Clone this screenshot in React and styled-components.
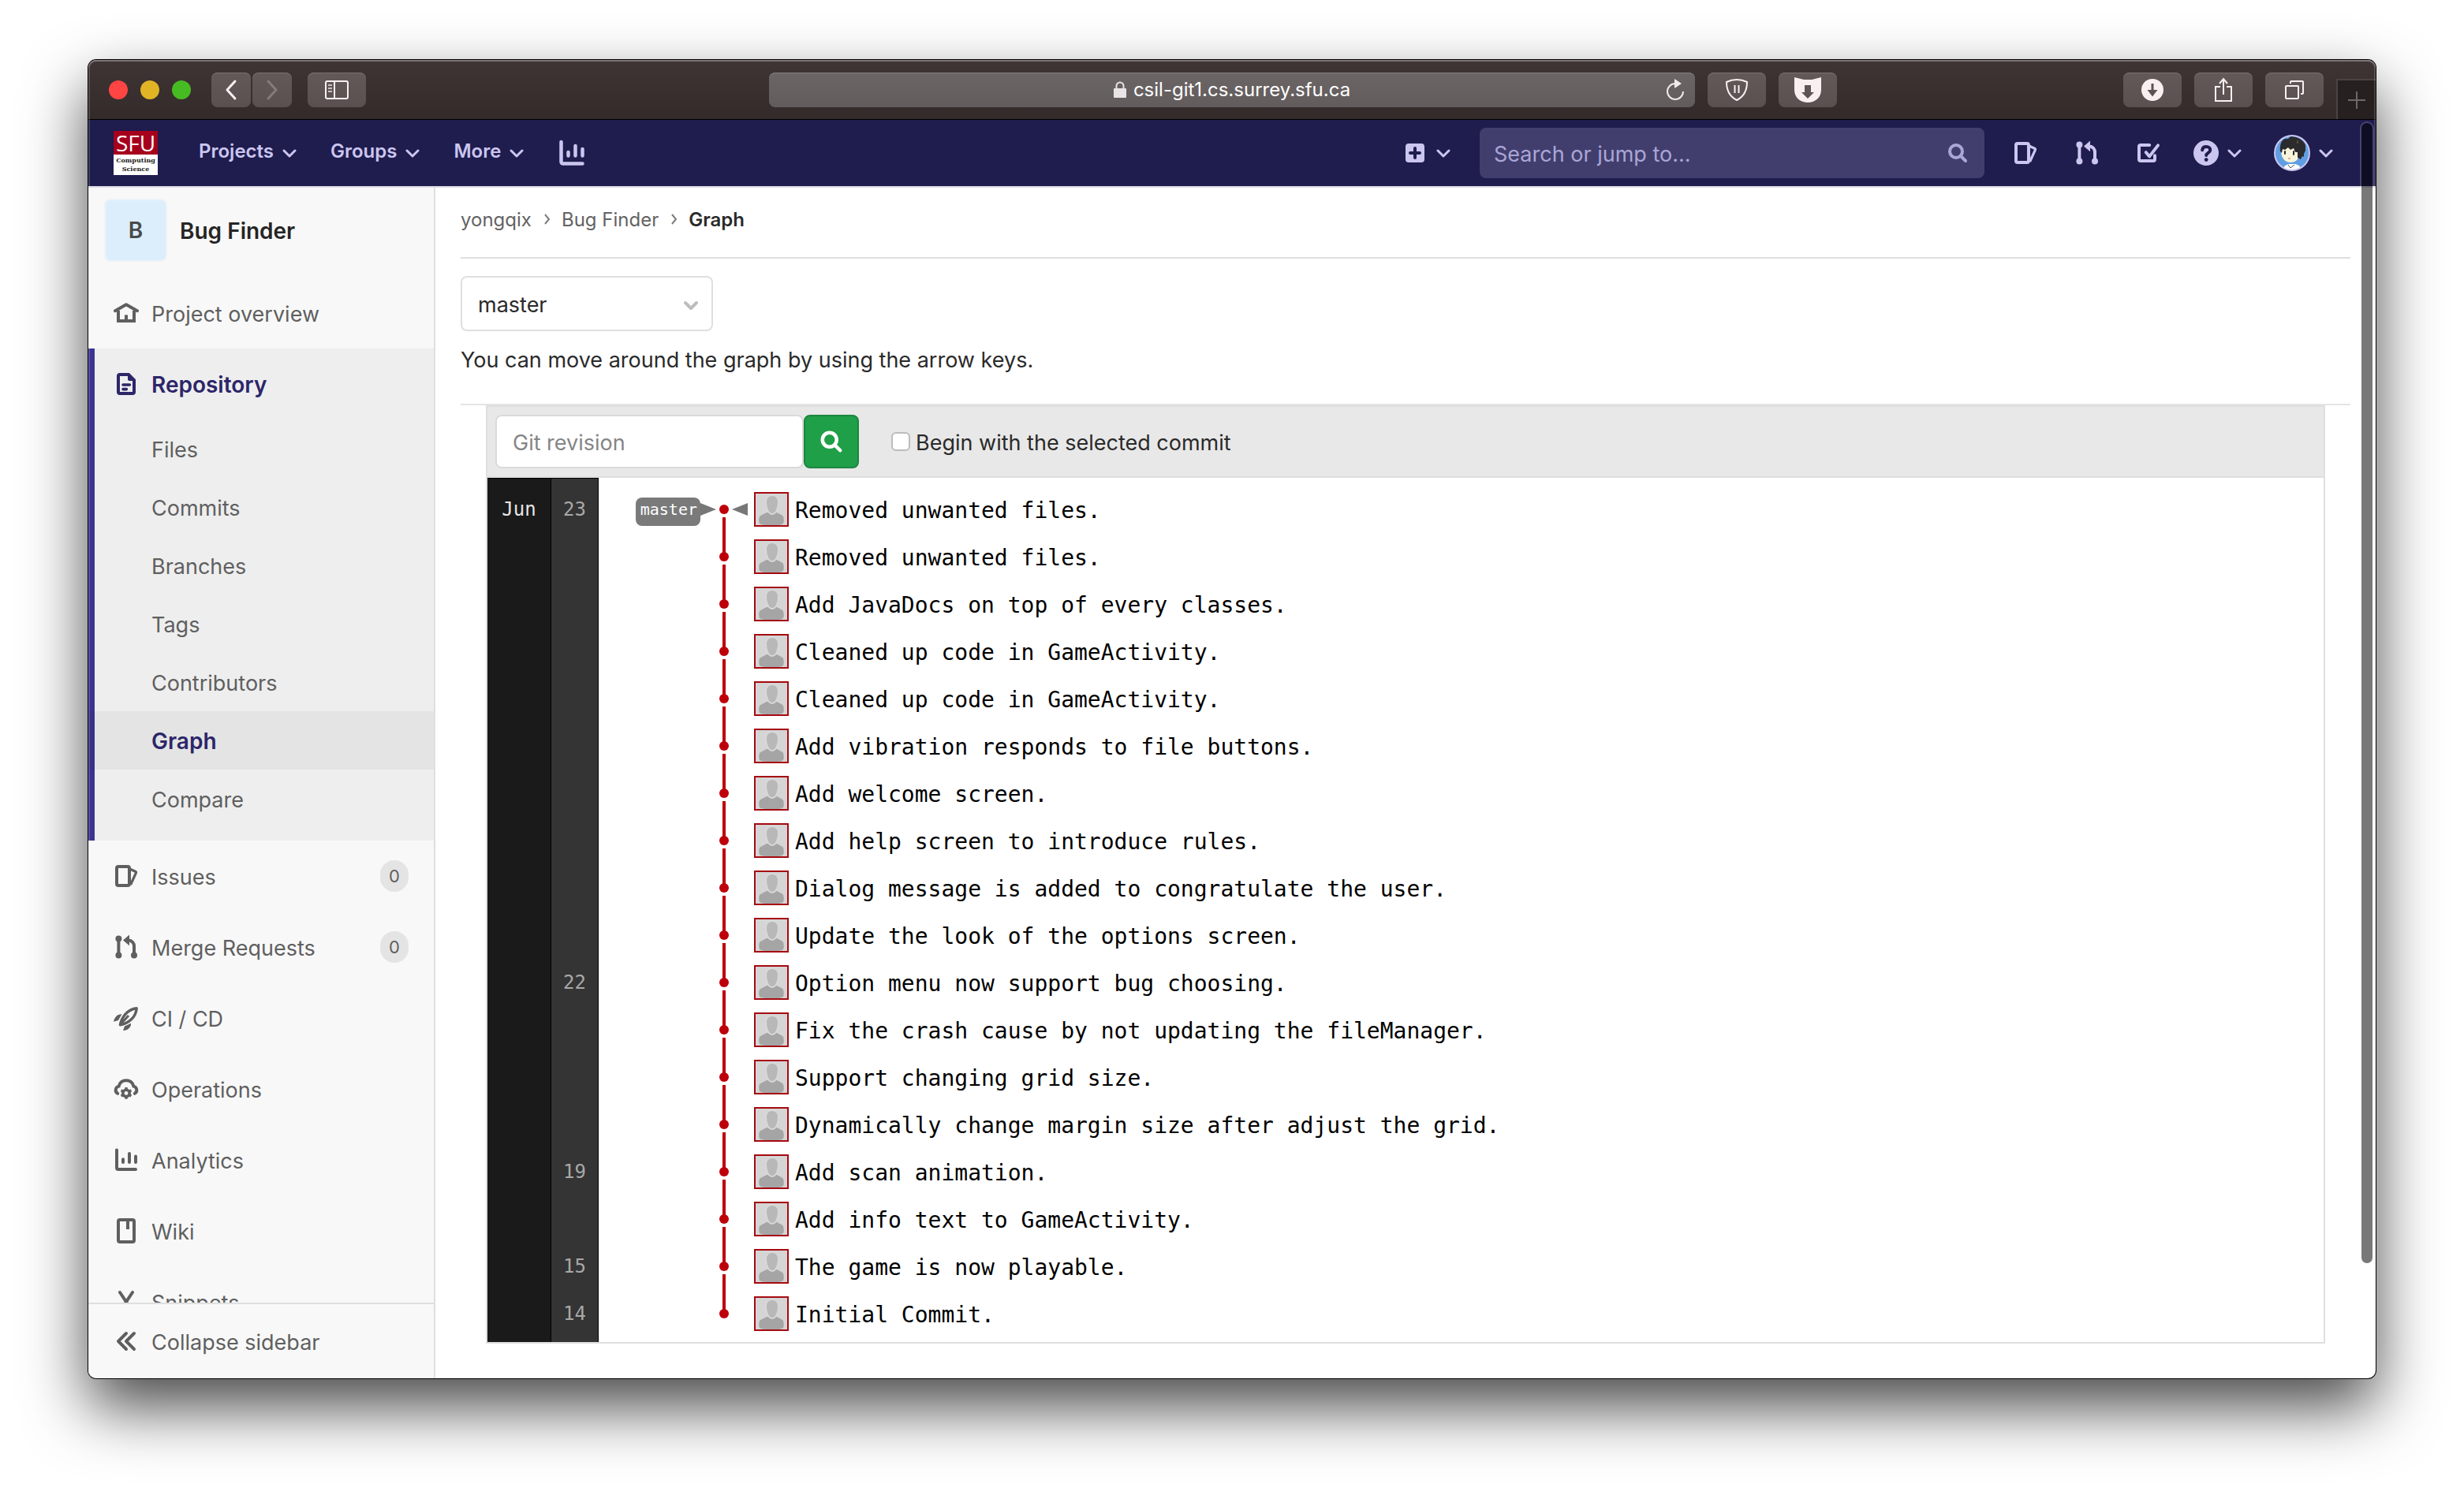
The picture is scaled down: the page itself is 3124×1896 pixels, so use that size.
import React from "react";
import styled, { createGlobalStyle, css } from "styled-components";

const Global = createGlobalStyle`
  * { box-sizing: border-box; }
  body {
    margin: 0;
    background: #fff;
    font-family: Inter, "Liberation Sans", sans-serif;
    font-size: 27px;
    color: #2a2a2a;
  }
  button, input, select { font: inherit; color: inherit; margin: 0; }
  button { padding: 0; border: 0; background: none; }
  a { color: inherit; text-decoration: none; }
  svg { display: block; flex: none; }
`;

/* ---------- window frame ---------- */

const Desktop = styled.div`
  min-height: 100vh;
  padding: 76px 112px 148px;
`;

const Window = styled.div`
  position: relative;
  display: flex;
  flex-direction: column;
  height: calc(100vh - 224px);
  overflow: hidden;
  border-radius: 10px;
  background: #fff;
  box-shadow: 0 0 0 1px #000, 0 36px 80px rgba(0, 0, 0, 0.72);

  &::after {
    content: "";
    position: absolute;
    inset: 0;
    border-radius: 10px;
    box-shadow: inset 0 2px 0 rgba(255, 255, 255, 0.2), inset 0 0 0 2px rgba(255, 255, 255, 0.16);
    pointer-events: none;
  }
`;

const Chrome = styled.header`
  flex: none;
  display: grid;
  grid-template-columns: minmax(0, 1fr) minmax(0, 1174px) minmax(0, 1fr);
  height: 76px;
  border-bottom: 1px solid #000;
  background: linear-gradient(#403535, #332a2a);
`;

const ChromeSide = styled.div`
  display: flex;
  align-items: center;
  gap: ${(p) => p.$gap}px;
  padding-left: ${(p) => p.$start}px;
`;

const Lights = styled.div`
  display: flex;
  gap: 16px;
  padding-right: 6px;
`;

const Light = styled.span`
  width: 24px;
  height: 24px;
  border-radius: 50%;
  background: ${(p) => p.$color};
`;

const Pair = styled.div`
  display: flex;
  gap: 2px;
`;

const ChromeButton = styled.button`
  display: flex;
  align-items: center;
  justify-content: center;
  width: ${(p) => (p.$narrow ? 50 : 74)}px;
  height: 44px;
  border-radius: 8px;
  color: ${(p) => (p.$dim ? "#857b7b" : "#f8f0f0")};
  background: linear-gradient(#645959, #5a5050);
  box-shadow: inset 0 1px 0 #7a7070;
`;

const Spacer = styled.div`
  flex: 1;
`;

const Address = styled.div`
  display: grid;
  grid-template-columns: 36px 1fr 36px;
  align-items: center;
  align-self: center;
  height: 44px;
  border-radius: 8px;
  color: #fff;
  font-size: 24px;
  background: linear-gradient(#6b6565, #635c5c);
  box-shadow: inset 0 1px 0 #857f7f;
`;

const Url = styled.div`
  grid-column: 2;
  display: flex;
  align-items: center;
  justify-content: center;
  gap: 9px;
`;

const NewTab = styled.button`
  align-self: flex-end;
  display: flex;
  align-items: center;
  justify-content: center;
  width: 50px;
  height: 51px;
  border-left: 2px solid #4b4343;
  border-top: 2px solid #4b4343;
  background: #262020;
  color: #6f6868;
`;

const ScrollThumb = styled.div`
  position: absolute;
  top: 80px;
  right: 4px;
  width: 14px;
  height: calc(100% - 226px);
  border-radius: 7px;
  background: rgba(0, 0, 0, 0.53);
  box-shadow: 0 0 0 2px rgba(255, 255, 255, 0.18);
`;

/* ---------- site navigation ---------- */

const Navbar = styled.nav`
  flex: none;
  display: flex;
  align-items: center;
  height: 86px;
  padding: 0 54px 0 32px;
  border-bottom: 2px solid #dcdbe4;
  background: #1f1c4e;
  color: #cbc6f0;
`;

const Logo = styled.a`
  display: flex;
  flex-direction: column;
  width: 56px;
  height: 56px;
  margin-right: 52px;
  text-align: center;
  background: #fff;
`;

const LogoTop = styled.span`
  height: 30px;
  font: 28px/30px "Open Sans", sans-serif;
  color: #fff;
  background: #a6001c;
`;

const LogoBottom = styled.span`
  padding-top: 2px;
  font: bold 8px/11px "DejaVu Serif", serif;
  color: #222;
`;

const NavGroup = styled.div`
  display: flex;
  align-items: center;
  gap: ${(p) => p.$gap}px;
`;

const NavLink = styled.button`
  display: flex;
  align-items: center;
  gap: 11px;
  font-size: 24px;
  font-weight: 600;
`;

const NavText = styled.span`
  padding-bottom: 5px;
`;

const SearchBox = styled.label`
  display: flex;
  align-items: center;
  width: 640px;
  height: 64px;
  margin: 0 36px 0 37px;
  padding: 0 18px;
  border-radius: 8px;
  color: #aaa6d6;
  background: #413e6e;
`;

const SearchInput = styled.input`
  flex: 1;
  min-width: 0;
  padding: 2px 0 0;
  border: 0;
  outline: 0;
  background: none;
  &::placeholder { color: #aaa6d6; opacity: 1; }
`;

/* ---------- sidebar ---------- */

const Body = styled.div`
  flex: 1;
  display: flex;
  min-height: 0;
`;

const Sidebar = styled.aside`
  flex: none;
  display: flex;
  flex-direction: column;
  width: 440px;
  border-right: 2px solid #dfdfdf;
  background: #f8f8f8;
  color: #5f5f5f;
`;

const SidebarScroll = styled.div`
  flex: 1;
  min-height: 0;
  overflow: hidden;
`;

const Project = styled.a`
  display: flex;
  align-items: center;
  gap: 16px;
  padding: 14px 20px 20px;
  font-weight: 600;
  font-size: 28px;
  color: #252525;
`;

const ProjectLetter = styled.span`
  display: flex;
  align-items: center;
  justify-content: center;
  width: 80px;
  height: 80px;
  border: 2px solid #eef3f7;
  border-radius: 8px;
  color: #4a4a4a;
  background: #dceefc;
`;

const Section = styled.div`
  padding-bottom: 16px;
  background: #eeeeee;
  box-shadow: inset 8px 0 0 #3b3391;
`;

const Item = styled.a`
  display: flex;
  align-items: center;
  gap: 16px;
  height: 90px;
  padding: 0 32px;
  ${(p) =>
    p.$active &&
    css`
      font-size: 28px;
      font-weight: 600;
      color: #2c2669;
    `}
`;

const ItemText = styled.span`
  padding-top: 2px;
`;

const SubItem = styled.a`
  display: flex;
  align-items: center;
  height: 74px;
  padding: 2px 0 0 80px;
  ${(p) =>
    p.$active &&
    css`
      font-size: 28px;
      font-weight: 600;
      color: #2c2669;
      background: #e4e4e4;
      box-shadow: inset 8px 0 0 #383089;
    `}
`;

const Count = styled.span`
  margin-left: auto;
  width: 36px;
  border-radius: 20px;
  font-size: 22px;
  line-height: 40px;
  text-align: center;
  background: #e4e4e4;
`;

const Collapse = styled.button`
  flex: none;
  display: flex;
  align-items: center;
  gap: 16px;
  height: 96px;
  padding: 0 32px;
  border-top: 2px solid #dfdfdf;
`;

/* ---------- page ---------- */

const Main = styled.main`
  flex: 1;
  min-width: 0;
  padding: 0 32px;
`;

const Crumbs = styled.nav`
  display: flex;
  align-items: center;
  gap: 13px;
  height: 90px;
  padding-bottom: 8px;
  border-bottom: 2px solid #dfdfdf;
  font-size: 24px;
  color: #636363;
`;

const Current = styled.span`
  font-weight: 600;
  color: #2a2a2a;
`;

const BranchPicker = styled.div`
  position: relative;
  width: 320px;
  margin-top: 22px;
  svg {
    position: absolute;
    top: 28px;
    right: 19px;
    color: #bdbdbd;
    pointer-events: none;
  }
`;

const BranchSelect = styled.select`
  appearance: none;
  display: block;
  width: 100%;
  height: 70px;
  padding: 2px 20px 0;
  border: 2px solid #dfdfdf;
  border-radius: 8px;
  background: #fff;
`;

const Hint = styled.p`
  margin: 0;
  padding: 19px 0 37px;
  line-height: 36px;
  border-bottom: 2px solid #e4e4e4;
`;

const Network = styled.section`
  margin: 0 32px;
  border: 2px solid #dfdfdf;
`;

const Toolbar = styled.form`
  display: flex;
  align-items: center;
  height: 90px;
  padding: 0 10px;
  border-bottom: 2px solid #dfdfdf;
  background: #e8e8e8;
`;

const RevisionInput = styled.input`
  width: 391px;
  height: 68px;
  padding: 2px 20px 0;
  border: 2px solid #dadada;
  border-radius: 8px;
  background: #fff;
  &::placeholder { color: #858585; opacity: 1; }
`;

const GoButton = styled.button`
  display: flex;
  align-items: center;
  justify-content: center;
  width: 70px;
  height: 68px;
  border: 2px solid #1d8640;
  border-radius: 8px;
  color: #fff;
  background: #1f9f47;
`;

const Check = styled.input`
  appearance: none;
  width: 24px;
  height: 24px;
  margin: 0 7px 0 41px;
  border: 2px solid #bcbcbc;
  border-radius: 6px;
  background: #fff;
`;

const CheckLabel = styled.label`
  padding-top: 2px;
`;

const Graph = styled.div`
  display: flex;
  font-family: "DejaVu Sans Mono", monospace;
`;

const DateColumn = styled.div`
  flex: none;
  width: ${(p) => p.$width}px;
  padding: 9px 0 6px;
  border: 1px solid #000;
  border-width: 1px 1px 0 0;
  font-size: 24px;
  text-align: center;
  color: ${(p) => p.$color};
  background: ${(p) => p.$bg};
`;

const DateCell = styled.div`
  height: 60px;
  line-height: 61px;
`;

const Commits = styled.ol`
  flex: 1;
  min-width: 0;
  margin: 0;
  padding: 10px 0 6px;
  list-style: none;
  font-size: 28px;
  color: #000;
`;

const Commit = styled.li`
  display: flex;
  align-items: center;
  height: 60px;
`;

const RefCell = styled.div`
  display: flex;
  justify-content: flex-end;
  align-items: center;
  width: 149px;
`;

const RefTag = styled.span`
  height: 36px;
  margin-top: 6px;
  padding: 0 4px 0 6px;
  border-radius: 8px;
  font-size: 20px;
  line-height: 30px;
  color: #fff;
  background: #7a7a7a;
`;

const PointerCell = styled.div`
  width: 28px;
`;

const Avatar = styled.span`
  margin-right: 8px;
  border: 2px solid #a60a10;
`;

const CommitText = styled.span`
  padding-top: 2px;
`;

/* ---------- drawings ---------- */

const Icon = ({ size = 32, children, stroke = 2 }) => (
  <svg width={size} height={size} viewBox="0 0 16 16" fill="none" stroke="currentColor" strokeWidth={stroke} aria-hidden="true">
    {children}
  </svg>
);

const Chevron = ({ heavy }) => (
  <svg width="18" height="18" viewBox="0 0 18 18" fill="none" stroke="currentColor" strokeWidth={heavy ? 4 : 3} strokeLinecap="round" strokeLinejoin="round">
    <path d="M2 6l7 7 7-7" />
  </svg>
);

const CrumbArrow = () => (
  <svg width="12" height="14" viewBox="0 0 12 14" fill="none" stroke="#7d7d7d" strokeWidth="2">
    <path d="M4 1l5 6-5 6" />
  </svg>
);

const SearchIcon = ({ size = 32, stroke = 2 }) => (
  <Icon size={size} stroke={stroke}>
    <circle cx="7" cy="7" r="4" />
    <path d="M10 10l3 3" strokeLinecap="round" />
  </Icon>
);

const IssuesIcon = () => (
  <Icon>
    <rect x="2" y="2" width="8" height="12" rx="1" />
    <path d="M10.5 3.6l3.3 1.5a.8.8 0 0 1 .4 1l-3.4 7.4" strokeWidth="1.6" strokeLinejoin="round" />
  </Icon>
);

const MergeIcon = () => (
  <Icon>
    <path d="M3.2 3v10M13 13V7.5a3.5 3.5 0 0 0-3.5-3.7" />
    <g fill="currentColor" stroke="none">
      <circle cx="3.2" cy="2.8" r="2" />
      <circle cx="3.2" cy="13.2" r="2" />
      <circle cx="13" cy="13.2" r="2" />
      <path d="M6 3.7L10 .3v6.8z" />
    </g>
  </Icon>
);

const TodoIcon = () => (
  <Icon>
    <path d="M8.6 3H3a1 1 0 0 0-1 1v8a1 1 0 0 0 1 1h8a1 1 0 0 0 1-1V9.6" strokeLinecap="round" />
    <path d="M6.4 7.6l2.2 2.6L14 3.2" strokeLinecap="round" strokeLinejoin="round" />
  </Icon>
);

const ChartIcon = ({ size }) => (
  <Icon size={size}>
    <path d="M2 1.8V13a1 1 0 0 0 1 1h11" strokeLinecap="round" />
    <path d="M6 7.6v1.9M10 4v5.5M14 5.8v3.7" strokeLinecap="round" />
  </Icon>
);

const PlusIcon = () => (
  <Icon>
    <rect x="2" y="2" width="12" height="12" rx="2" fill="currentColor" stroke="none" />
    <path d="M8 5v6M5 8h6" stroke="#1f1c4e" strokeLinecap="round" />
  </Icon>
);

const HelpIcon = () => (
  <Icon>
    <circle cx="8" cy="8" r="8" fill="currentColor" stroke="none" />
    <path d="M5.6 6.1C5.8 4.7 6.8 4 8.1 4c1.4 0 2.5.8 2.5 2.2 0 1.7-2.5 1.7-2.5 3.3" stroke="#1f1c4e" strokeLinecap="round" />
    <circle cx="8.1" cy="12.3" r="1.2" fill="#1f1c4e" stroke="none" />
  </Icon>
);

const UserPicture = () => (
  <svg width="46" height="46" viewBox="0 0 46 46">
    <clipPath id="face-clip"><circle cx="23" cy="23" r="21" /></clipPath>
    <circle cx="23" cy="23" r="22" fill="#5f9fe4" stroke="#cbc6f0" strokeWidth="2" />
    <g clipPath="url(#face-clip)">
      <path d="M11 46c0-5 3-8 8-9h8c5 1 8 4 8 9z" fill="#fff" />
      <path d="M18 38l3 4 5-4" fill="none" stroke="#555" strokeWidth="1" />
      <path d="M9 20c0-7 5-8 12-8 8 0 11 4 11 11 0 8-4 12-11 12S9 29 9 20z" fill="#f8f4dc" />
      <path d="M8 21C7 14 9 7 14 5l4 0 3-3c9 0 16 4 19 11l0 7-2 4 0 4-2-1-2 4-4-2 0-7-3 0-2-5-4 2-3-3-4 3-3-1-1 5z" fill="#2b2b2d" />
      <path d="M14 21v3M25 21v4" stroke="#2b2b2d" strokeWidth="2" strokeLinecap="round" />
      <path d="M18 30h3" stroke="#c46a5a" strokeWidth="1" />
      <path d="M30 7v4" stroke="#8a6a40" strokeWidth="1" />
    </g>
  </svg>
);

const HomeIcon = () => (
  <Icon>
    <path d="M1 6.6l7-4 7 4" strokeLinecap="round" strokeLinejoin="round" />
    <path d="M3 6.5V13h10V6.5" />
    <path d="M8 9.2V13" />
  </Icon>
);

const FileIcon = () => (
  <Icon>
    <path d="M3 3a1 1 0 0 1 1-1h5.5L13 5.500V13a1 1 0 0 1-1 1H4a1 1 0 0 1-1-1z" />
    <path d="M9 1.5L13.5 6H10a1 1 0 0 1-1-1z" fill="currentColor" stroke="none" />
    <path d="M6 8.5h4.2M6 11.3h2.2" strokeWidth="1.8" strokeLinecap="round" />
  </Icon>
);

const RocketIcon = () => (
  <Icon>
    <path d="M4.2 12.4C5 8 8.5 2.500 14.6 1.9 14.200 7.5 9.5 11.5 4.2 12.4z" strokeWidth="1.7" strokeLinejoin="round" />
    <path d="M4.5 11.8l5-5.3" strokeWidth="1.5" />
    <path d="M0 10.4C.5 7.5 2.5 5.4 5.2 5.6L3 9.5z" fill="currentColor" stroke="none" />
    <path d="M6 16c3 0 5.2-2 5-4.6L7 13.2z" fill="currentColor" stroke="none" />
  </Icon>
);

const CloudGearIcon = () => (
  <Icon>
    <path d="M2.6 10.9A2.5 2.5 0 0 1 3.3 6.3C3.8 4 5.7 2.6 8 2.6s4.2 1.4 4.700 3.7a2.5 2.5 0 0 1 .7 4.6" strokeLinecap="round" />
    <circle cx="8" cy="10.7" r="2.1" strokeWidth="1.8" />
    <path d="M8 7v1.4M8 13v1.4M4.800 8.9l1.2.7M10 11.8l1.2.7M11.2 8.9l-1.2.7M6 11.8l-1.2.7" strokeWidth="1.7" />
  </Icon>
);

const BookIcon = () => (
  <Icon>
    <rect x="3" y="1" width="10" height="14" rx="1" />
    <path d="M9 1v6" />
  </Icon>
);

const ScissorsIcon = () => (
  <Icon>
    <path d="M4 2l6 9M12 2l-6 9" strokeLinecap="round" />
    <circle cx="4.5" cy="12.5" r="1.6" />
    <circle cx="11.5" cy="12.5" r="1.6" />
  </Icon>
);

const CollapseIcon = () => (
  <Icon>
    <path d="M8 3L3 8l5 5M13 3L8 8l5 5" strokeLinecap="round" strokeLinejoin="round" />
  </Icon>
);

const ArrowIcon = ({ d }) => (
  <svg width="16" height="34" viewBox="0 0 16 34" fill="none" stroke="currentColor" strokeWidth="3" strokeLinecap="round" strokeLinejoin="round">
    <path d={d} />
  </svg>
);

const PanelIcon = () => (
  <svg width="32" height="26" viewBox="0 0 32 26" fill="none" stroke="currentColor" strokeWidth="2">
    <rect x="2" y="2" width="28" height="22" rx="2" />
    <path d="M13 2v22" />
    <path d="M5 7h5M5 11h5M5 15h5" strokeOpacity=".7" />
  </svg>
);

const LockIcon = () => (
  <svg width="16" height="22" viewBox="0 0 16 22">
    <rect x="0" y="9" width="16" height="12" rx="1" fill="#e9e5e5" />
    <path d="M3.5 10V6a4.5 4.5 0 0 1 9 0v4" fill="none" stroke="#e9e5e5" strokeWidth="2" />
  </svg>
);

const ReloadIcon = () => (
  <svg width="24" height="28" viewBox="0 0 24 28">
    <path d="M21 16a10 10 0 1 1-10-10" fill="none" stroke="#efeaea" strokeWidth="2" />
    <path d="M10 0v12l9-6z" fill="#efeaea" />
  </svg>
);

const ShieldIcon = () => (
  <svg width="30" height="30" viewBox="0 0 30 30" fill="none" stroke="currentColor" strokeWidth="2">
    <path d="M15 2c4.5 0 9 1 13 3 0 10-3 18-13 23C5 23 2 15 2 5c4-2 8.5-3 13-3z" strokeLinejoin="round" />
    <path d="M12.5 9v10M17.5 9v10" />
  </svg>
);

const MaskIcon = () => (
  <svg width="36" height="34" viewBox="0 0 36 34" fill="currentColor">
    <path fillRule="evenodd" d="M1 1l12 3h10l12-3v16c0 10-8 16-17 16S1 27 1 17zM14 11v9h-4l8 8 8-8h-4v-9z" />
  </svg>
);

const DownloadIcon = () => (
  <svg width="28" height="28" viewBox="0 0 28 28">
    <circle cx="14" cy="14" r="14" fill="currentColor" />
    <path d="M12.5 6h3v8h5L14 22.5 7.5 14h5z" fill="#5c5252" />
  </svg>
);

const ShareIcon = () => (
  <svg width="24" height="32" viewBox="0 0 24 32" fill="none" stroke="currentColor" strokeWidth="2">
    <path d="M8 12H2v18h20V12h-6M12 22V3M7 8l5-6 5 6" />
  </svg>
);

const TabsIcon = () => (
  <svg width="26" height="26" viewBox="0 0 26 26" fill="none" stroke="currentColor" strokeWidth="2">
    <rect x="2" y="8" width="16" height="16" rx="1" />
    <path d="M8 5V3a1 1 0 0 1 1-1h14a1 1 0 0 1 1 1v14a1 1 0 0 1-1 1h-2" />
  </svg>
);

const TabPlusIcon = () => (
  <svg width="22" height="22" viewBox="0 0 22 22" stroke="currentColor" strokeWidth="2">
    <path d="M11 0v22M0 11h22" />
  </svg>
);

const Node = ({ first, last }) => (
  <svg width="20" height="60" viewBox="0 0 20 60">
    {!first && <path d="M10 0v30" stroke="#bd0009" strokeWidth="4" />}
    {!last && <path d="M10 40v20" stroke="#bd0009" strokeWidth="4" />}
    <circle cx="10" cy="30" r="6" fill="#bd0009" />
  </svg>
);

const Triangle = ({ left }) => (
  <svg width="20" height="18" viewBox="0 0 20 18" fill="#777">
    <path d={left ? "M20 1v16L0 9z" : "M0 1v16l20-8z"} />
  </svg>
);

const Silhouette = () => (
  <svg width="40" height="40" viewBox="0 0 40 40">
    <rect width="40" height="40" fill="#d5d5d5" />
    <path d="M5 29c2-2 6-3 9-5h13c3 2 7 3 8 5 1 3 1 7 0 9-3 2-6 2-8 2H13c-3 0-6-1-8-2-1-3-1-6 0-9z" fill="#a5a5a5" />
    <path d="M21 2c5 0 8 3 8 9 0 7-3 15-8 15s-8-8-8-15c0-6 3-9 8-9z" fill="#b8b8b8" stroke="#d8d8d8" strokeWidth="2" />
  </svg>
);

/* ---------- data ---------- */

const files = ["Files", "Commits", "Branches", "Tags", "Contributors", "Graph", "Compare"];

const links = [
  { label: "Issues", icon: <IssuesIcon />, count: 0 },
  { label: "Merge Requests", icon: <MergeIcon />, count: 0 },
  { label: "CI / CD", icon: <RocketIcon /> },
  { label: "Operations", icon: <CloudGearIcon /> },
  { label: "Analytics", icon: <ChartIcon /> },
  { label: "Wiki", icon: <BookIcon /> },
  { label: "Snippets", icon: <ScissorsIcon /> },
];

const commits = [
  { text: "Removed unwanted files.", month: "Jun", day: 23, branch: "master" },
  { text: "Removed unwanted files." },
  { text: "Add JavaDocs on top of every classes." },
  { text: "Cleaned up code in GameActivity." },
  { text: "Cleaned up code in GameActivity." },
  { text: "Add vibration responds to file buttons." },
  { text: "Add welcome screen." },
  { text: "Add help screen to introduce rules." },
  { text: "Dialog message is added to congratulate the user." },
  { text: "Update the look of the options screen." },
  { text: "Option menu now support bug choosing.", day: 22 },
  { text: "Fix the crash cause by not updating the fileManager." },
  { text: "Support changing grid size." },
  { text: "Dynamically change margin size after adjust the grid." },
  { text: "Add scan animation.", day: 19 },
  { text: "Add info text to GameActivity." },
  { text: "The game is now playable.", day: 15 },
  { text: "Initial Commit.", day: 14 },
];

/* ---------- parts ---------- */

const BrowserBar = () => (
  <Chrome>
    <ChromeSide $gap={20} $start={26}>
      <Lights>
        <Light $color="#ff4444" />
        <Light $color="#e0b424" />
        <Light $color="#47bb22" />
      </Lights>
      <Pair>
        <ChromeButton $narrow aria-label="Back"><ArrowIcon d="M13 6L3 17l10 11" /></ChromeButton>
        <ChromeButton $narrow $dim aria-label="Forward"><ArrowIcon d="M3 6l10 11L3 28" /></ChromeButton>
      </Pair>
      <ChromeButton aria-label="Show sidebar"><PanelIcon /></ChromeButton>
    </ChromeSide>
    <Address>
      <Url><LockIcon />csil-git1.cs.surrey.sfu.ca</Url>
      <ReloadIcon />
    </Address>
    <ChromeSide $gap={16} $start={16}>
      <ChromeButton aria-label="Privacy"><ShieldIcon /></ChromeButton>
      <ChromeButton aria-label="Blocker"><MaskIcon /></ChromeButton>
      <Spacer />
      <ChromeButton aria-label="Downloads"><DownloadIcon /></ChromeButton>
      <ChromeButton aria-label="Share"><ShareIcon /></ChromeButton>
      <ChromeButton aria-label="Tabs"><TabsIcon /></ChromeButton>
      <NewTab aria-label="New tab"><TabPlusIcon /></NewTab>
    </ChromeSide>
  </Chrome>
);

const SiteNav = () => (
  <Navbar>
    <Logo href="#">
      <LogoTop>SFU</LogoTop>
      <LogoBottom>Computing<br />Science</LogoBottom>
    </Logo>
    <NavGroup $gap={43}>
      {["Projects", "Groups", "More"].map((t) => (
        <NavLink key={t}><NavText>{t}</NavText><Chevron /></NavLink>
      ))}
      <NavLink aria-label="Analytics"><ChartIcon size={36} /></NavLink>
    </NavGroup>
    <Spacer />
    <NavLink aria-label="New"><PlusIcon /><Chevron /></NavLink>
    <SearchBox>
      <SearchInput placeholder="Search or jump to..." aria-label="Search or jump to" />
      <SearchIcon />
    </SearchBox>
    <NavGroup $gap={41}>
      <NavGroup $gap={46}>
        <NavLink aria-label="Issues"><IssuesIcon /></NavLink>
        <NavLink aria-label="Merge requests"><MergeIcon /></NavLink>
        <NavLink aria-label="To-Do list"><TodoIcon /></NavLink>
      </NavGroup>
      <NavLink aria-label="Help"><HelpIcon /><Chevron /></NavLink>
      <NavLink aria-label="Account"><UserPicture /><Chevron /></NavLink>
    </NavGroup>
  </Navbar>
);

const ProjectSidebar = () => (
  <Sidebar>
    <SidebarScroll>
      <Project href="#"><ProjectLetter>B</ProjectLetter><ItemText>Bug Finder</ItemText></Project>
      <Item href="#"><HomeIcon /><ItemText>Project overview</ItemText></Item>
      <Section>
        <Item href="#" $active><FileIcon /><ItemText>Repository</ItemText></Item>
        {files.map((f) => (
          <SubItem href="#" key={f} $active={f === "Graph"}>{f}</SubItem>
        ))}
      </Section>
      {links.map((l) => (
        <Item href="#" key={l.label}>
          {l.icon}
          <ItemText>{l.label}</ItemText>
          {l.count !== undefined && <Count>{l.count}</Count>}
        </Item>
      ))}
    </SidebarScroll>
    <Collapse><CollapseIcon /><ItemText>Collapse sidebar</ItemText></Collapse>
  </Sidebar>
);

const CommitGraph = () => (
  <Graph>
    <DateColumn $width={81} $bg="#1a1a1a" $color="#e6e6e6">
      {commits.map((c, i) => <DateCell key={i}>{c.month}</DateCell>)}
    </DateColumn>
    <DateColumn $width={60} $bg="#343434" $color="#a8a8a8">
      {commits.map((c, i) => <DateCell key={i}>{c.day}</DateCell>)}
    </DateColumn>
    <Commits>
      {commits.map((c, i) => (
        <Commit key={i}>
          <RefCell>{c.branch && <><RefTag>{c.branch}</RefTag><Triangle /></>}</RefCell>
          <Node first={i === 0} last={i === commits.length - 1} />
          <PointerCell>{c.branch && <Triangle left />}</PointerCell>
          <Avatar><Silhouette /></Avatar>
          <CommitText>{c.text}</CommitText>
        </Commit>
      ))}
    </Commits>
  </Graph>
);

export default function App() {
  return (
    <Desktop>
      <Global />
      <Window>
        <BrowserBar />
        <SiteNav />
        <Body>
          <ProjectSidebar />
          <Main>
            <Crumbs>
              <a href="#">yongqix</a><CrumbArrow />
              <a href="#">Bug Finder</a><CrumbArrow />
              <Current>Graph</Current>
            </Crumbs>
            <BranchPicker>
              <BranchSelect aria-label="Branch" defaultValue="master"><option>master</option></BranchSelect>
              <Chevron heavy />
            </BranchPicker>
            <Hint>You can move around the graph by using the arrow keys.</Hint>
            <Network>
              <Toolbar>
                <RevisionInput placeholder="Git revision" aria-label="Git revision" />
                <GoButton type="button" aria-label="Search"><SearchIcon size={36} /></GoButton>
                <Check type="checkbox" id="begin" />
                <CheckLabel htmlFor="begin">Begin with the selected commit</CheckLabel>
              </Toolbar>
              <CommitGraph />
            </Network>
          </Main>
        </Body>
        <ScrollThumb />
      </Window>
    </Desktop>
  );
}
